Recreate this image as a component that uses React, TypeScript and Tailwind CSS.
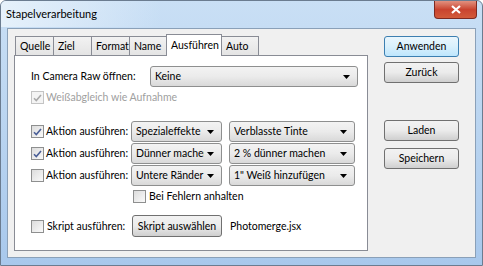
import React from "react";

const Arrow = () => (
  <svg width="7" height="4" viewBox="0 0 7 4" className="shrink-0">
    <path d="M0 0H7L3.5 4Z" fill="#000" />
  </svg>
);

function Combo({ text, w, className = "" }: { text: string; w: string; className?: string }) {
  return (
    <div
      className={`${w} h-[21px] shrink-0 flex items-center justify-between pl-[4px] pr-[7px] border border-[#8e8f8f] rounded-[3px] bg-gradient-to-b from-[#f3f3f3] via-[#ebebeb] to-[#d9d9d9] overflow-hidden ${className}`}
    >
      <span className="whitespace-nowrap overflow-hidden flex-1 min-w-0 mr-[3px]">{text}</span>
      <Arrow />
    </div>
  );
}

function Check({ checked = false, disabled = false }: { checked?: boolean; disabled?: boolean }) {
  return (
    <div
      className={`w-[13px] h-[13px] shrink-0 border ${disabled ? "border-[#c4c4c4] bg-[#f4f4f4]" : "border-[#8e8f8f] bg-gradient-to-br from-[#dcdcdc] to-[#fafafa]"} flex items-center justify-center`}
    >
      {checked && (
        <svg width="9" height="8" viewBox="0 0 9 8">
          <path
            d="M1 4.2L3.3 6.5L8 1"
            fill="none"
            stroke={disabled ? "#a9a9a9" : "#4a5f97"}
            strokeWidth="1.6"
          />
        </svg>
      )}
    </div>
  );
}

function Btn({ children, def = false, className = "" }: { children: React.ReactNode; def?: boolean; className?: string }) {
  return (
    <div
      className={`h-[21px] shrink-0 flex items-center justify-center rounded-[3px] border ${def ? "border-[#3c7fb1] bg-gradient-to-b from-[#eaf6fd] via-[#d9f0fc] to-[#bee6fd]" : "border-[#707070] bg-gradient-to-b from-[#f2f2f2] via-[#ebebeb] to-[#cfcfcf]"} ${className}`}
    >
      {children}
    </div>
  );
}

const tabs = [
  { t: "Quelle", w: "w-[39px]" },
  { t: "Ziel", w: "w-[39px]" },
  { t: "Format", w: "w-[39px]" },
  { t: "Name", w: "w-[38px]" },
  { t: "Ausführen", w: "w-[56px]", sel: true },
  { t: "Auto", w: "w-[38px]" },
];

export default function App() {
  return (
    <div className="w-[483px] h-[266px] font-['Segoe_UI','Lato',sans-serif] text-[10.5px] text-black leading-none whitespace-nowrap">
      <div className="w-full h-full flex flex-col border border-[#6b7c90] rounded-t-[6px] bg-gradient-to-b from-[#c9dff5] via-[#b9d4f0] to-[#a8c8ec] overflow-hidden">
        {/* title bar */}
        <div className="h-[27px] flex items-start justify-between relative">
          <div className="absolute left-0 top-0 w-[160px] h-[26px] bg-gradient-to-r from-[#e6f1fb] to-transparent" />
          <span className="relative pl-[5px] pt-[7px] text-[11px] text-black">Stapelverarbeitung</span>
          <div className="relative mr-[5px] w-[43px] h-[18px] rounded-b-[4px] border border-t-0 border-[#7d2a22] bg-gradient-to-b from-[#e1907f] via-[#c9432f] to-[#d25a3a] flex items-center justify-center">
            <svg width="10" height="9" viewBox="0 0 10 9">
              <path d="M1 1L9 8M9 1L1 8" stroke="#fff" strokeWidth="2.2" />
            </svg>
          </div>
        </div>
        {/* client area */}
        <div className="flex-1 mx-[6px] mb-[7px] border border-[#8aa0b8] bg-[#f0f0f0] flex items-start">
          {/* tab control */}
          <div className="ml-[6px] mt-[5px] w-[354px] flex flex-col">
            <div className="h-[21px] flex items-end pl-[1px]">
              {tabs.map((tab, i) =>
                tab.sel ? (
                  <div
                    key={tab.t}
                    className={`${tab.w} h-[22px] -mb-[1px] -ml-[1px] relative z-10 bg-white border border-b-0 border-[#898c95] pl-[4px] pt-[5px]`}
                  >
                    {tab.t}
                  </div>
                ) : (
                  <div
                    key={tab.t}
                    className={`${tab.w} h-[19px] border border-b-0 border-[#898c95] bg-gradient-to-b from-[#f2f2f2] to-[#e4e4e4] pl-[4px] pt-[4px] overflow-hidden ${i === 0 ? "" : "-ml-[1px]"}`}
                  >
                    {tab.t}
                  </div>
                )
              )}
            </div>
            <div className="h-[196px] border border-[#898c95] bg-white flex flex-col pl-[16px]">
              <div className="mt-[10px] flex items-center">
                <span className="w-[119px]">In Camera Raw öffnen:</span>
                <Combo text="Keine" w="w-[208px]" />
              </div>
              <div className="mt-[4px] flex items-center gap-[2px] text-[#a0a0a0]">
                <Check checked disabled />
                <span>Weißabgleich wie Aufnahme</span>
              </div>
              <div className="mt-[17px] flex flex-col gap-[1px]">
                {[
                  { c: true, a: "Spezialeffekte", b: "Verblasste Tinte" },
                  { c: true, a: "Dünner machen", b: "2 % dünner machen" },
                  { c: false, a: "Untere Ränder", b: "1\" Weiß hinzufügen" },
                ].map((r) => (
                  <div key={r.a} className="flex items-center h-[21px]">
                    <Check checked={r.c} />
                    <span className="ml-[2px] w-[85px]">Aktion ausführen:</span>
                    <Combo text={r.a} w="w-[91px]" />
                    <Combo text={r.b} w="w-[126px]" className="ml-[7px]" />
                  </div>
                ))}
              </div>
              <div className="mt-[4px] ml-[102px] flex items-center gap-[3px]">
                <Check />
                <span>Bei Fehlern anhalten</span>
              </div>
              <div className="mt-[12px] flex items-center">
                <Check />
                <span className="ml-[3px] w-[85px]">Skript ausführen:</span>
                <Btn className="w-[90px] h-[22px]">Skript auswählen</Btn>
                <span className="ml-[8px]">Photomerge.jsx</span>
              </div>
            </div>
          </div>
          {/* buttons */}
          <div className="ml-[16px] mt-[7px] flex flex-col w-[75px]">
            <Btn def>Anwenden</Btn>
            <Btn className="mt-[5px]">Zurück</Btn>
            <Btn className="mt-[37px]">Laden</Btn>
            <Btn className="mt-[7px]">Speichern</Btn>
          </div>
        </div>
      </div>
    </div>
  );
}
